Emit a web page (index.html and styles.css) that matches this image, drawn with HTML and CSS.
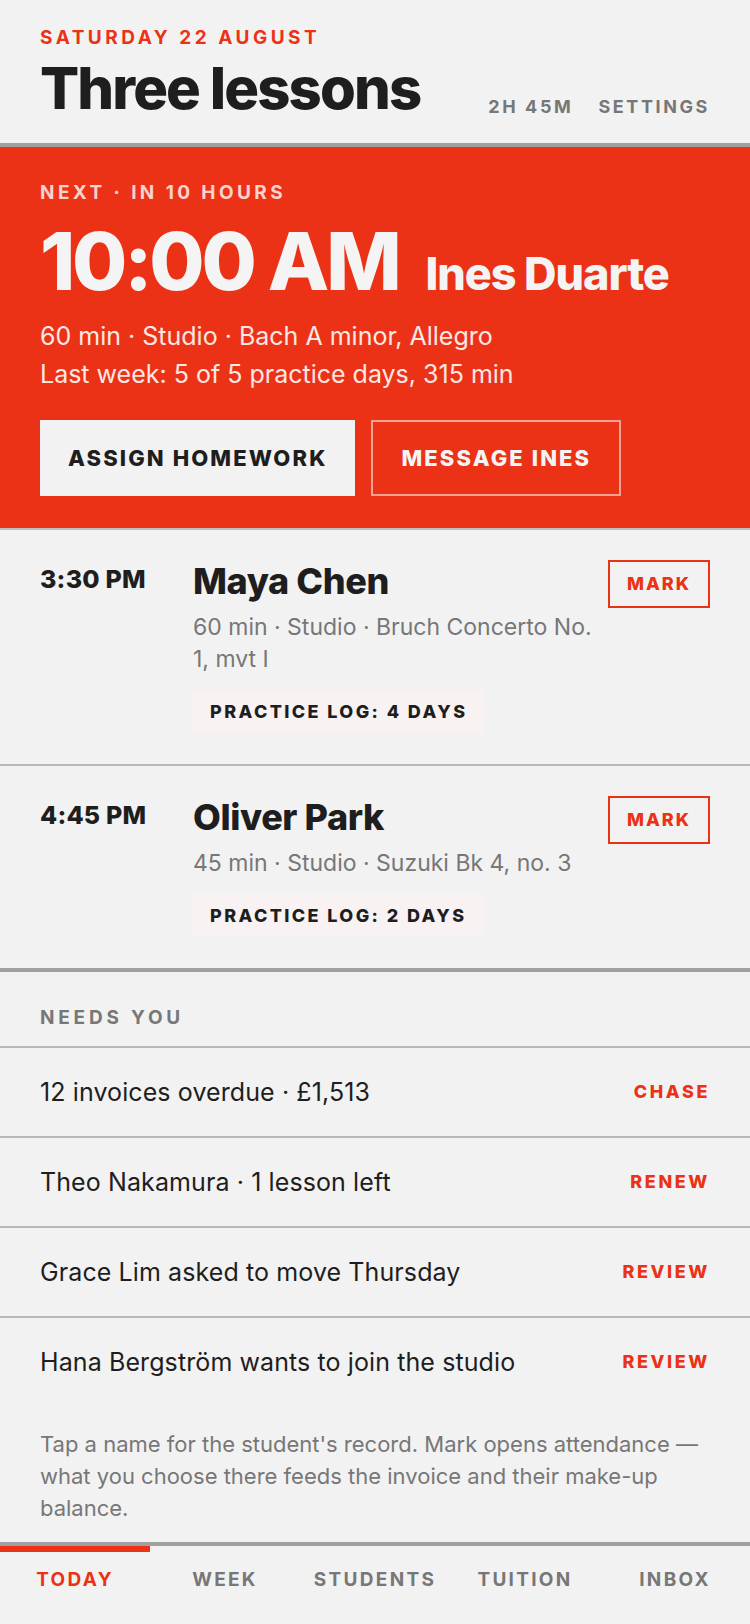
FILE: index.html
```html
<!DOCTYPE html>
<html lang="en">
<head>
  <meta charset="UTF-8">
  <meta name="viewport" content="width=device-width, initial-scale=1.0">
  <title>Today</title>
  <link rel="stylesheet" href="styles.css">
</head>
<body>
  <div class="app">
    <header class="top">
      <p class="date">Saturday 22 August</p>
      <div class="title-row">
        <h1>Three lessons</h1>
        <div class="meta">
          <span>2h 45m</span>
          <a href="#">Settings</a>
        </div>
      </div>
    </header>

    <section class="next">
      <p class="next-label">Next · in 10 hours</p>
      <div class="next-head">
        <span class="next-time">10:00 AM</span>
        <span class="next-name">Ines Duarte</span>
      </div>
      <p class="next-info">60 min · Studio · Bach A minor, Allegro</p>
      <p class="next-info">Last week: 5 of 5 practice days, 315 min</p>
      <div class="next-actions">
        <button class="btn-solid">Assign homework</button>
        <button class="btn-outline">Message Ines</button>
      </div>
    </section>

    <section class="lessons">
      <div class="lesson">
        <div class="lesson-time">3:30 PM</div>
        <div class="lesson-body">
          <h2>Maya Chen</h2>
          <p>60 min · Studio · Bruch Concerto No. 1, mvt I</p>
          <span class="log">Practice log: 4 days</span>
        </div>
        <button class="mark">Mark</button>
      </div>
      <div class="lesson">
        <div class="lesson-time">4:45 PM</div>
        <div class="lesson-body">
          <h2>Oliver Park</h2>
          <p>45 min · Studio · Suzuki Bk 4, no. 3</p>
          <span class="log">Practice log: 2 days</span>
        </div>
        <button class="mark">Mark</button>
      </div>
    </section>

    <section class="needs">
      <h3>Needs you</h3>
      <ul class="todo">
        <li><span>12 invoices overdue · £1,513</span><a href="#">Chase</a></li>
        <li><span>Theo Nakamura · 1 lesson left</span><a href="#">Renew</a></li>
        <li><span>Grace Lim asked to move Thursday</span><a href="#">Review</a></li>
        <li><span>Hana Bergström wants to join the studio</span><a href="#">Review</a></li>
      </ul>
      <p class="hint">Tap a name for the student's record. Mark opens attendance — what you choose there feeds the invoice and their make-up balance.</p>
    </section>

    <nav class="tabs">
      <a href="#" class="active">Today</a>
      <a href="#">Week</a>
      <a href="#">Students</a>
      <a href="#">Tuition</a>
      <a href="#">Inbox</a>
    </nav>
  </div>
</body>
</html>
```

FILE: styles.css
```css
body {
  margin: 0;
  background: #f2f2f2;
  color: #1e1e1e;
  font-family: Inter, Roboto, 'Liberation Sans', sans-serif;
}

p, h1, h2, h3, ul {
  margin: 0;
  padding: 0;
}

a {
  text-decoration: none;
  color: inherit;
}

button {
  font-family: inherit;
  cursor: pointer;
}

.app {
  min-height: 100vh;
  display: flex;
  flex-direction: column;
}

/* header */
.top {
  padding: 26px 40px 23px;
  border-bottom: 4px solid #a0a0a0;
}

.date {
  color: #ec3216;
  font-size: 19px;
  line-height: 24px;
  font-weight: 700;
  letter-spacing: 3.5px;
  text-transform: uppercase;
}

.title-row {
  display: flex;
  justify-content: space-between;
  align-items: flex-end;
  margin-top: 6px;
}

h1 {
  font-size: 58px;
  line-height: 64px;
  font-weight: 800;
  letter-spacing: -1.9px;
}

.meta {
  display: flex;
  gap: 25px;
  margin-bottom: 2px;
  color: #777;
  font-size: 18px;
  line-height: 22px;
  font-weight: 700;
  letter-spacing: 2.6px;
  text-transform: uppercase;
}

/* next lesson */
.next {
  background: #ec3216;
  color: #f4f4f4;
  padding: 34px 40px 32px;
  border-bottom: 2px solid #bdbdbd;
}

.next-label {
  color: #f9d3cc;
  font-size: 19px;
  line-height: 24px;
  font-weight: 700;
  letter-spacing: 3.4px;
  text-transform: uppercase;
}

.next-head {
  display: flex;
  align-items: baseline;
  gap: 27px;
  margin-top: 16px;
  margin-bottom: 16px;
  font-weight: 800;
}

.next-time {
  font-size: 80px;
  line-height: 80px;
  letter-spacing: -3.2px;
}

.next-name {
  font-size: 45px;
  letter-spacing: -1.1px;
}

.next-info {
  font-size: 25px;
  line-height: 38px;
  color: #fbe7e3;
}

.next-actions {
  display: flex;
  gap: 16px;
  margin-top: 27px;
}

.next-actions button {
  font-size: 22px;
  line-height: 26px;
  font-weight: 800;
  letter-spacing: 2.1px;
  text-transform: uppercase;
}

.btn-solid {
  background: #f2f2f2;
  color: #1e1e1e;
  border: none;
  padding: 25px 28px;
}

.btn-outline {
  background: transparent;
  color: #f4f4f4;
  border: 2px solid #f4a293;
  padding: 23px 28px;
}

/* lessons */
.lesson {
  display: grid;
  grid-template-columns: 137px 1fr auto;
  column-gap: 16px;
  align-items: start;
  padding: 31px 40px;
  border-bottom: 2px solid #b8b8b8;
}

.lesson:last-child {
  border-bottom: 4px solid #a0a0a0;
}

.lesson-time {
  margin-top: 3px;
  font-size: 25px;
  line-height: 30px;
  font-weight: 800;
  letter-spacing: 0.2px;
}

.lesson-body h2 {
  font-size: 36px;
  line-height: 41px;
  font-weight: 800;
  letter-spacing: -0.4px;
}

.lesson-body p {
  margin-top: 9px;
  color: #777;
  font-size: 23px;
  line-height: 32px;
}

.log {
  display: inline-block;
  margin-top: 15px;
  padding: 11px 17px;
  background: #f8f3f2;
  font-size: 18px;
  line-height: 21px;
  font-weight: 800;
  letter-spacing: 2.4px;
  text-transform: uppercase;
}

.mark {
  margin-top: -1px;
  background: transparent;
  border: 2px solid #ec3216;
  color: #ec3216;
  padding: 12px 17px;
  font-size: 18px;
  line-height: 20px;
  font-weight: 800;
  letter-spacing: 2px;
  text-transform: uppercase;
}

/* needs you */
.needs h3 {
  padding: 35px 40px 17px;
  border-bottom: 2px solid #b8b8b8;
  color: #777;
  font-size: 19px;
  line-height: 22px;
  font-weight: 700;
  letter-spacing: 3.8px;
  text-transform: uppercase;
}

.todo {
  list-style: none;
}

.todo li {
  display: flex;
  justify-content: space-between;
  align-items: center;
  padding: 29px 40px;
  border-bottom: 2px solid #b8b8b8;
  font-size: 25px;
  line-height: 30px;
  letter-spacing: 0.1px;
}

.todo li:last-child {
  border-bottom: none;
}

.todo a {
  color: #ec3216;
  font-size: 18px;
  font-weight: 800;
  letter-spacing: 2.6px;
  text-transform: uppercase;
}

.hint {
  padding: 22px 40px 17px;
  color: #777;
  font-size: 22px;
  line-height: 32px;
}

/* tab bar */
.tabs {
  margin-top: auto;
  display: grid;
  grid-template-columns: repeat(5, 1fr);
  border-top: 4px solid #a0a0a0;
}

.tabs a {
  border-top: 6px solid transparent;
  padding: 16px 0 32px;
  text-align: center;
  color: #777;
  font-size: 19px;
  line-height: 24px;
  font-weight: 700;
  letter-spacing: 2.3px;
  text-transform: uppercase;
}

.tabs a.active {
  border-top-color: #ec3216;
  color: #ec3216;
}
```
